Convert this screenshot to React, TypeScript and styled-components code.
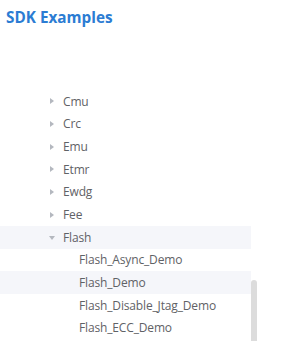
import React from "react";
import styled, { createGlobalStyle } from "styled-components";

const Global = createGlobalStyle`
  html, body { margin: 0; padding: 0; background: #fff; overflow: hidden; }
  body { font-family: "Open Sans", "Noto Sans", "Liberation Sans", sans-serif; }
`;

const Page = styled.div`
  width: 284px;
  height: 341px;
  display: flex;
  flex-direction: column;
  overflow: hidden;
`;

const Title = styled.h1`
  margin: 7px 0 0 6px;
  font-size: 15.3px;
  line-height: 20px;
  font-weight: 700;
  color: #2b7cd3;
`;

const Body = styled.div`
  margin-top: 63px;
  display: flex;
  flex: 1;
  min-height: 0;
`;

const Tree = styled.div`
  width: 251px;
  display: flex;
  flex-direction: column;
`;

const Row = styled.div<{ $level: number; $active?: boolean }>`
  height: 22.67px;
  flex: 0 0 22.67px;
  display: flex;
  align-items: center;
  gap: 5px;
  padding-left: ${(p) => 46 + p.$level * 16}px;
  background: ${(p) => (p.$active ? "#f5f6fa" : "transparent")};
  font-size: 12px;
  letter-spacing: -0.15px;
  color: #5f6266;
  white-space: nowrap;
`;

const Arrow = styled.span<{ $open?: boolean; $leaf?: boolean }>`
  width: 12px;
  height: 12px;
  display: flex;
  align-items: center;
  justify-content: center;
  &::before {
    content: "";
    display: ${(p) => (p.$leaf ? "none" : "block")};
    width: 0;
    height: 0;
    ${(p) =>
      p.$open
        ? `border-left: 3.5px solid transparent; border-right: 3.5px solid transparent; border-top: 4px solid #b4b8bf; margin-top: 1px;`
        : `border-top: 3.5px solid transparent; border-bottom: 3.5px solid transparent; border-left: 4px solid #b4b8bf;`}
  }
`;

const Track = styled.div`
  width: 6px;
  padding-top: 190px;
  display: flex;
  flex-direction: column;
`;

const Thumb = styled.div`
  flex: 1;
  background: #dcdcdc;
  border-radius: 3px 3px 0 0;
`;

const parents = ["Cmu", "Crc", "Emu", "Etmr", "Ewdg", "Fee"];
const children = [
  { name: "Flash_Async_Demo", active: false },
  { name: "Flash_Demo", active: true },
  { name: "Flash_Disable_Jtag_Demo", active: false },
  { name: "Flash_ECC_Demo", active: false },
];

export default function App() {
  return (
    <Page>
      <Global />
      <Title>SDK Examples</Title>
      <Body>
        <Tree>
          {parents.map((p) => (
            <Row key={p} $level={0}>
              <Arrow />
              <span>{p}</span>
            </Row>
          ))}
          <Row $level={0} $active>
            <Arrow $open />
            <span>Flash</span>
          </Row>
          {children.map((c) => (
            <Row key={c.name} $level={1} $active={c.active}>
              <Arrow $leaf />
              <span>{c.name}</span>
            </Row>
          ))}
        </Tree>
        <Track>
          <Thumb />
        </Track>
      </Body>
    </Page>
  );
}
